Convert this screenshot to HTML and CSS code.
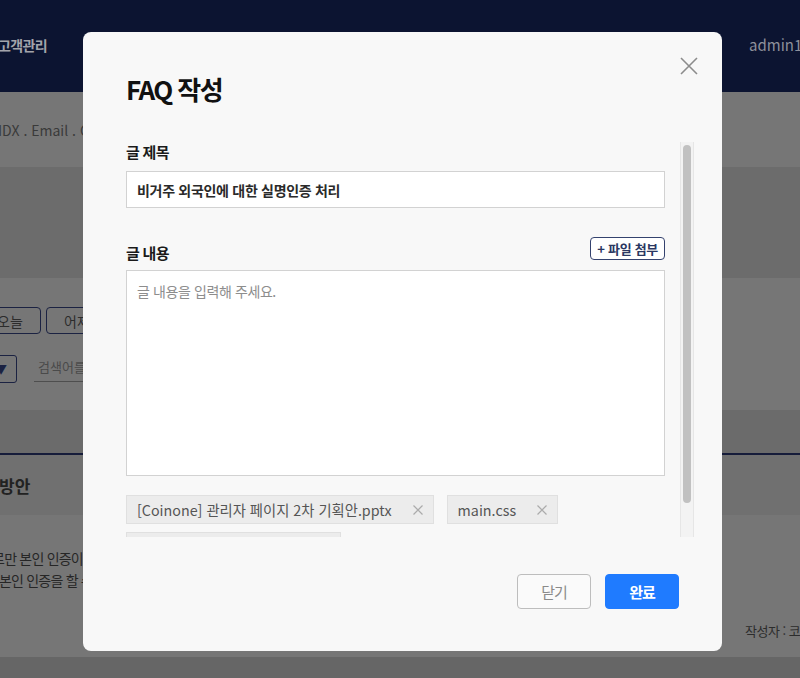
FILE: index.html
```html
<!DOCTYPE html>
<html lang="ko">
<head>
<meta charset="utf-8">
<title>FAQ 작성</title>
<link rel="stylesheet" href="styles.css">
</head>
<body>
<div class="page">
  <header class="topbar">
    <span class="topbar-menu">고객관리</span>
    <span class="topbar-user">admin1234 님</span>
  </header>
  <div class="crumb">IDX . Email . Content</div>
  <div class="band band-search"></div>
  <div class="filters">
    <div class="filter-row">
      <span class="date-btn">오늘</span>
      <span class="date-btn">어제</span>
    </div>
    <div class="filter-row search-row">
      <span class="select-box"><span class="select-arrow">▼</span></span>
      <span class="search-field">검색어를 입력하세요</span>
    </div>
  </div>
  <div class="band band-table"></div>
  <div class="list-head">방안</div>
  <div class="list-body">
    <p class="body-line line-1">으로만 본인 인증이 가능하며,</p>
    <p class="body-line line-2">본인 인증을 할 수 없습니다.</p>
    <p class="meta">작성자 : 코인원 관리자</p>
  </div>
  <div class="bottom-band"></div>
</div>

<div class="modal">
  <button class="modal-close" type="button" aria-label="닫기">
    <svg width="18" height="18" viewBox="0 0 18 18"><path d="M1 1L17 17M17 1L1 17" stroke="#8c8c8c" stroke-width="1.6" fill="none"/></svg>
  </button>
  <h1 class="modal-title">FAQ 작성</h1>
  <div class="modal-body">
    <div class="modal-scroll">
      <div class="field-label">글 제목</div>
      <input class="text-input" type="text" value="비거주 외국인에 대한 실명인증 처리">
      <div class="label-row">
        <div class="field-label label-content">글 내용</div>
        <button class="attach-btn" type="button">+ 파일 첨부</button>
      </div>
      <textarea class="text-area" placeholder="글 내용을 입력해 주세요."></textarea>
      <div class="chips">
        <span class="chip"><span class="chip-name">[Coinone] 관리자 페이지 2차 기획안.pptx</span><svg class="chip-x" width="10" height="10" viewBox="0 0 10 10"><path d="M0.5 0.5L9.5 9.5M9.5 0.5L0.5 9.5" stroke="#ababab" stroke-width="1.2" fill="none"/></svg></span>
        <span class="chip"><span class="chip-name">main.css</span><svg class="chip-x" width="10" height="10" viewBox="0 0 10 10"><path d="M0.5 0.5L9.5 9.5M9.5 0.5L0.5 9.5" stroke="#ababab" stroke-width="1.2" fill="none"/></svg></span>
        <span class="chip"><span class="chip-name">개인정보처리방침_v2.hwp</span><svg class="chip-x" width="10" height="10" viewBox="0 0 10 10"><path d="M0.5 0.5L9.5 9.5M9.5 0.5L0.5 9.5" stroke="#ababab" stroke-width="1.2" fill="none"/></svg></span>
      </div>
    </div>
    <div class="scrollbar"><div class="scroll-thumb"></div></div>
  </div>
  <div class="modal-footer">
    <button class="btn btn-cancel" type="button">닫기</button>
    <button class="btn btn-ok" type="button">완료</button>
  </div>
</div>
</body>
</html>
```

FILE: styles.css
```css
* { box-sizing: border-box; }

html, body {
  margin: 0;
  padding: 0;
}

body {
  width: 800px;
  height: 678px;
  overflow: hidden;
  position: relative;
  background: #767676;
  font-family: "Noto Sans CJK KR", "Noto Sans", sans-serif;
}

.page {
  width: 800px;
  display: flex;
  flex-direction: column;
}

/* top navigation bar */
.topbar {
  height: 92px;
  background: #0c1431;
  display: flex;
  align-items: center;
  padding-bottom: 3px;
}

.topbar-menu {
  margin-left: -2px;
  font-size: 14px;
  font-weight: 700;
  letter-spacing: -0.6px;
  color: #a3a4ab;
}

.topbar-user {
  margin-left: auto;
  width: 51px;
  flex: none;
  white-space: nowrap;
  font-size: 15px;
  color: #8e909b;
}

.crumb {
  height: 75px;
  padding-top: 28px;
  margin-left: -2px;
  font-size: 14px;
  line-height: 20px;
  color: #3a3a3a;
}

.band { flex: none; }
.band-search { height: 111px; background: #6c6c6c; }

.filters {
  height: 132px;
  padding-top: 29px;
  display: flex;
  flex-direction: column;
  gap: 21px;
}

.filter-row {
  display: flex;
  align-items: center;
  gap: 5px;
  margin-left: -21px;
}

.date-btn {
  width: 62px;
  height: 27px;
  border: 1px solid #1b2242;
  border-radius: 4px;
  display: flex;
  align-items: center;
  justify-content: center;
  font-size: 14px;
  color: #2c2c2c;
}

.search-row {
  margin-left: -83px;
  gap: 17px;
  align-items: stretch;
}

.select-box {
  width: 100px;
  height: 28px;
  border: 1px solid #1b2242;
  border-radius: 3px;
  display: flex;
  align-items: center;
  justify-content: flex-end;
  padding-right: 9px;
}

.select-arrow {
  font-size: 12px;
  color: #1b2242;
  line-height: 1;
}

.search-field {
  width: 200px;
  height: 27px;
  border-bottom: 1px solid #4e4e4e;
  padding-left: 4px;
  padding-top: 2px;
  font-size: 13px;
  color: #4a4a4a;
  white-space: nowrap;
}

.band-table {
  height: 45px;
  background: #6b6b6b;
  border-bottom: 2px solid #161c3a;
}

.list-head {
  height: 60px;
  background: #707070;
  display: flex;
  align-items: center;
  margin-left: -1px;
  font-size: 17px;
  font-weight: 700;
  color: #222;
}

.list-body {
  height: 142px;
  padding-top: 32px;
  background: #767676;
}

.body-line {
  margin: 0;
  font-size: 14px;
  line-height: 22px;
  letter-spacing: -0.8px;
  color: #262626;
  white-space: nowrap;
}

.line-1 { margin-left: -20px; }
.line-2 { margin-left: -1px; }

.meta {
  margin: 30px 0 0 745px;
  font-size: 13px;
  line-height: 20px;
  letter-spacing: -0.5px;
  color: #2c2c2c;
  white-space: nowrap;
}

.bottom-band {
  height: 21px;
  background: #666;
}

/* modal */
.modal {
  position: fixed;
  left: 83px;
  top: 32px;
  width: 639px;
  height: 619px;
  border-radius: 8px;
  background: #f8f8f8;
  display: flex;
  flex-direction: column;
  padding: 0 28px 0 43px;
}

.modal-close {
  position: absolute;
  right: 24px;
  top: 25px;
  width: 18px;
  height: 18px;
  padding: 0;
  border: 0;
  background: none;
  display: block;
}

.modal-close svg { display: block; }

.modal-title {
  margin: 40px 0 0;
  font-size: 26px;
  line-height: 34px;
  font-weight: 700;
  letter-spacing: -1.6px;
  color: #111;
}

.modal-body {
  margin-top: 36px;
  height: 395px;
  display: flex;
  gap: 15px;
}

.modal-scroll {
  flex: 1;
  min-width: 0;
  overflow: hidden;
}

.scrollbar {
  width: 14px;
  flex: none;
  background: #f3f3f3;
  border-left: 1px solid #e6e6e6;
  border-right: 1px solid #e6e6e6;
  padding: 3px 2px 0;
}

.scroll-thumb {
  height: 358px;
  border-radius: 4px;
  background: #c1c1c1;
}

.field-label {
  font-size: 15px;
  line-height: 20px;
  font-weight: 700;
  letter-spacing: -0.7px;
  color: #1a1a1a;
}

.text-input {
  display: block;
  width: 100%;
  height: 37px;
  margin-top: 9px;
  border: 1px solid #d2d2d2;
  background: #fff;
  padding: 0 10px;
  font-family: inherit;
  font-size: 14px;
  font-weight: 700;
  letter-spacing: -0.3px;
  color: #2a2a2a;
  outline: none;
}

.label-row {
  margin-top: 29px;
  display: flex;
  align-items: flex-end;
  justify-content: space-between;
}

.label-content { margin-bottom: -3px; }

.attach-btn {
  height: 23px;
  padding: 0 6px;
  border: 1px solid #34426e;
  border-radius: 4px;
  background: #fff;
  font-family: inherit;
  font-size: 13px;
  font-weight: 700;
  letter-spacing: -0.3px;
  color: #2b3762;
  line-height: 21px;
}

.text-area {
  display: block;
  width: 100%;
  height: 206px;
  margin-top: 10px;
  border: 1px solid #d2d2d2;
  background: #fff;
  padding: 10px 10px;
  resize: none;
  font-family: inherit;
  font-size: 14px;
  line-height: 20px;
  letter-spacing: -0.4px;
  color: #1e1e1e;
  outline: none;
}

.text-area::placeholder { color: #8d8d8d; }

.chips {
  margin-top: 19px;
  display: flex;
  flex-wrap: wrap;
  gap: 8px 13px;
}

.chip {
  height: 29px;
  display: inline-flex;
  align-items: center;
  padding: 0 10px;
  background: #ececec;
  border: 1px solid #e0e0e0;
  font-size: 14.3px;
  color: #555;
  white-space: nowrap;
}

.chip-x {
  margin-left: 21px;
  display: block;
  flex: none;
}

.modal-footer {
  margin-top: 37px;
  margin-right: 15px;
  display: flex;
  justify-content: flex-end;
  gap: 14px;
}

.btn {
  width: 74px;
  height: 35px;
  border-radius: 4px;
  font-family: inherit;
  font-size: 15px;
  letter-spacing: -1px;
  padding: 0;
}

.btn-cancel {
  background: #fafafa;
  border: 1px solid #bdbdbd;
  color: #8a8a8a;
}

.btn-ok {
  background: #1f7bff;
  border: 1px solid #1f7bff;
  color: #fff;
  font-weight: 700;
}
```
